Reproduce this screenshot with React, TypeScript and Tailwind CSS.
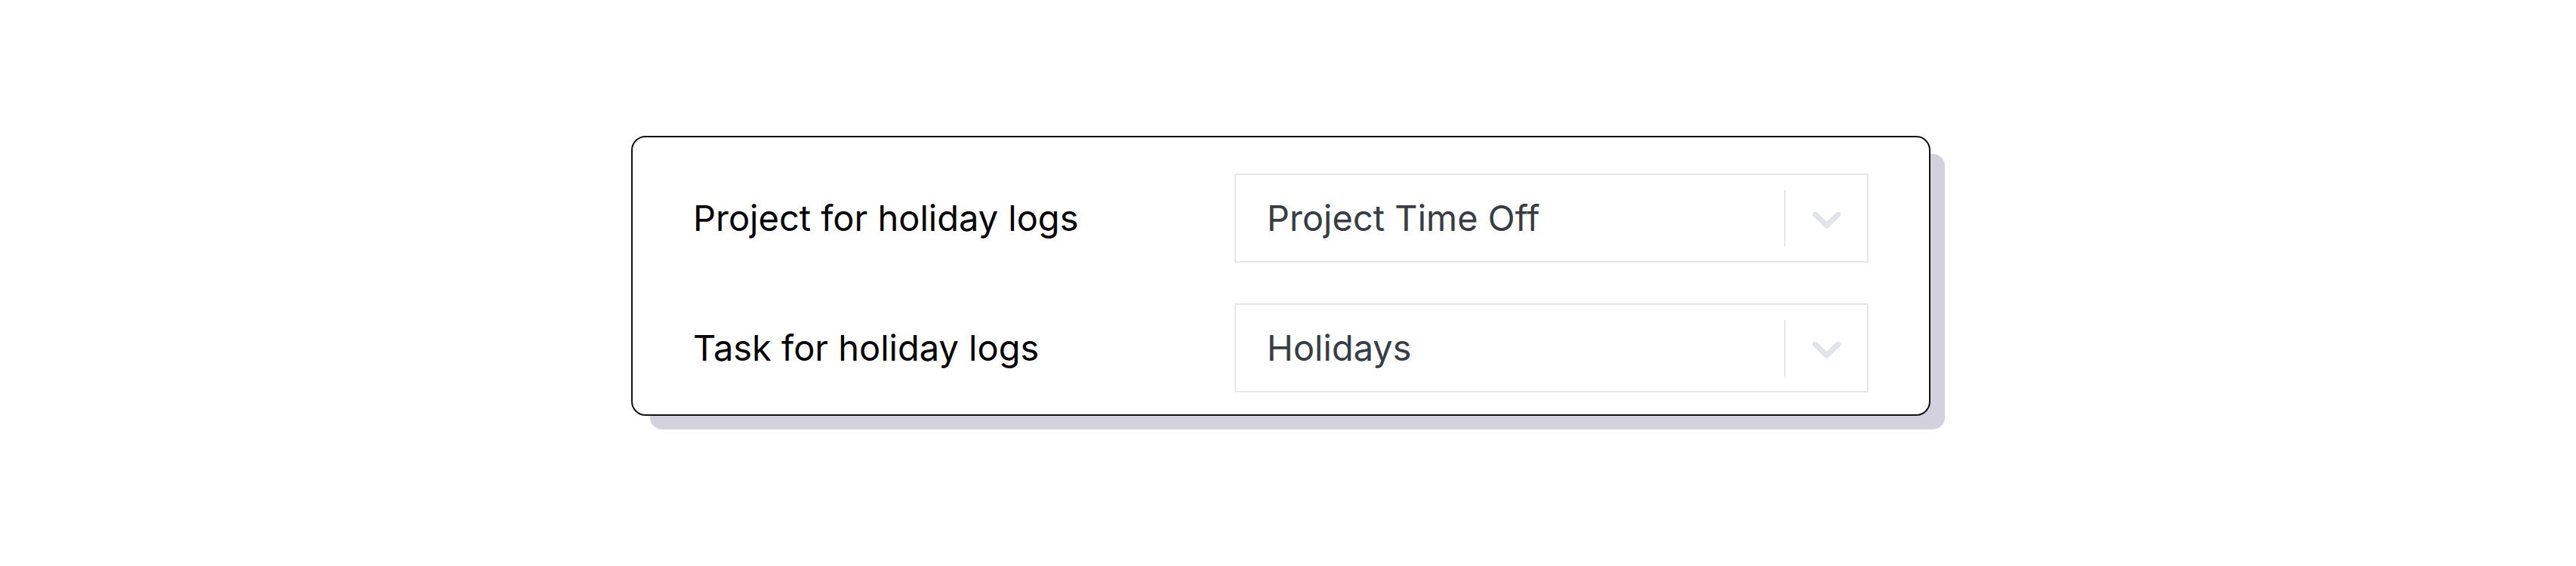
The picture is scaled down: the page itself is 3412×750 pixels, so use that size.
import React from "react";

type SelectProps = {
  value: string;
};

const Chevron = () => (
  <svg
    viewBox="0 0 20 20"
    width={65}
    height={65}
    className="fill-[#e1e4e8]"
    aria-hidden="true"
  >
    <path d="M4.516 7.548c0.436-0.446 1.043-0.481 1.576 0l3.908 3.747 3.908-3.747c0.533-0.481 1.141-0.446 1.574 0 0.436 0.445 0.408 1.197 0 1.615-0.406 0.418-4.695 4.502-4.695 4.502-0.217 0.223-0.502 0.335-0.787 0.335s-0.57-0.112-0.789-0.335c0 0-4.287-4.084-4.695-4.502s-0.436-1.17 0-1.615z" />
  </svg>
);

const Select = ({ value }: SelectProps) => (
  <div className="flex h-[118px] w-[840px] items-center border-2 border-[#e5e7eb] bg-white">
    <span className="flex-1 pl-[41px] text-[47px] text-[#383d44]">{value}</span>
    {/* separator */}
    <span className="h-[75px] w-[2px] bg-[#e5e7eb]"></span>
    {/* dropdown indicator */}
    <div className="flex w-[108px] items-center justify-center">
      <Chevron />
    </div>
  </div>
);

const rows = [
  { label: "Project for holiday logs", value: "Project Time Off" },
  { label: "Task for holiday logs", value: "Holidays" },
];

export default function App() {
  return (
    <div
      className="flex min-h-[750px] w-full items-center justify-center bg-white"
      style={{ fontFamily: "Inter, 'Noto Sans', sans-serif" }}
    >
      <div className="pr-[19px] pb-[19px]">
        <div className="flex w-[1721px] flex-col gap-[54px] rounded-[19px] border-2 border-[#111] bg-white px-[80px] pt-[48px] pb-[29px] shadow-[22px_21px_0_-3px_#d2d1dd]">
          {rows.map((row) => (
            <div key={row.label} className="flex items-center">
              <p className="flex-1 text-[47px] text-black">{row.label}</p>
              <Select value={row.value} />
            </div>
          ))}
        </div>
      </div>
    </div>
  );
}
